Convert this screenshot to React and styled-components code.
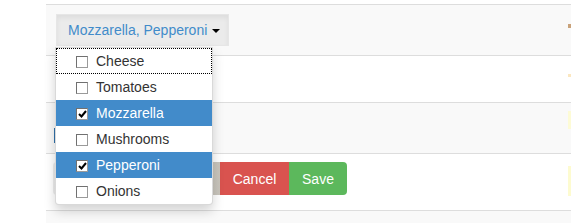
import React from 'react'
import styled, { createGlobalStyle, css } from 'styled-components'

const GlobalStyle = createGlobalStyle`
  html, body {
    margin: 0;
    padding: 0;
    overflow: hidden;
    background: #fff;
  }
  body {
    font-family: "Liberation Sans", Arial, sans-serif;
    font-size: 14px;
    color: #333;
  }
`

const Page = styled.div`
  padding: 4px 0 0 46px;
  width: 525px;
`

const Table = styled.div`
  border-top: 1px solid #ddd;
`

const Row = styled.div`
  display: flex;
  justify-content: space-between;
  height: ${p => p.h}px;
  border-bottom: 1px solid #ddd;
  background: ${p => (p.striped ? '#f9f9f9' : '#fff')};
`

const Cell = styled.div`
  display: flex;
  align-items: flex-start;
  padding: ${p => p.pad || '0 0 0 10px'};
`

const Tail = styled.div`
  width: 3px;
  margin-top: ${p => p.top}px;
  height: ${p => p.size}px;
  background: ${p => p.color};
`

const Dropdown = styled.div`
  position: relative;
`

const Toggle = styled.button`
  display: flex;
  align-items: center;
  height: 32px;
  width: 173px;
  padding: 0 0 0 11px;
  font: inherit;
  color: #428bca;
  background: #ebebeb;
  border: 1px solid #e6e6e6;
  border-radius: 0;
  box-shadow: inset 0 3px 5px rgba(0, 0, 0, 0.06);
  cursor: pointer;
`

const Caret = styled.span`
  display: inline-block;
  margin-left: 5px;
  margin-top: 1px;
  border-top: 4px solid #000;
  border-left: 4px solid transparent;
  border-right: 4px solid transparent;
`

const Menu = styled.ul`
  position: absolute;
  top: 33px;
  left: -1px;
  z-index: 10;
  width: 156px;
  margin: 0;
  padding: 0;
  list-style: none;
  background: #fff;
  border: 1px solid rgba(0, 0, 0, 0.15);
  border-radius: 0 0 4px 4px;
  box-shadow: 0 6px 12px rgba(0, 0, 0, 0.175);
`

const Item = styled.li`
  display: flex;
  align-items: center;
  height: 26px;
  padding-left: 20px;
  color: #333;
  ${p => p.active && css`
    background: #428bca;
    color: #fff;
  `}
  ${p => p.focused && css`
    outline: 1px dotted #000;
    outline-offset: -1px;
  `}
  &:last-child {
    border-radius: 0 0 4px 4px;
  }
`

const Box = styled.span`
  display: inline-flex;
  align-items: center;
  justify-content: center;
  box-sizing: border-box;
  width: 12px;
  height: 12px;
  margin: 1px 8px 0 0;
  background: #fff;
  border: 1px solid #707070;
  border-right-color: #9a9a9a;
  border-bottom-color: #9a9a9a;
`

const Field = styled.div`
  margin: 25px 0 0 -2px;
  width: 120px;
  height: 15px;
  border-left: 2px solid #3071a9;
`

const Group = styled.div`
  display: flex;
  margin-top: 8px;
`

const Btn = styled.button`
  height: 33px;
  padding: 0;
  width: ${p => p.w}px;
  font: inherit;
  font-size: 14px;
  color: #fff;
  border: 0;
  background: ${p => p.bg};
  border-radius: ${p => p.radius || '0'};
`

const toppings = [
  { name: 'Cheese', focused: true },
  { name: 'Tomatoes' },
  { name: 'Mozzarella', checked: true },
  { name: 'Mushrooms' },
  { name: 'Pepperoni', checked: true },
  { name: 'Onions' },
]

function Check({ checked }) {
  return (
    <Box>
      {checked && (
        <svg width="9" height="8" viewBox="0 0 9 8">
          <path d="M1 4 L3.5 6.5 L8 1" fill="none" stroke="#000" strokeWidth="2" />
        </svg>
      )}
    </Box>
  )
}

export default function App() {
  return (
    <>
      <GlobalStyle />
      <Page>
        <Table>
          <Row h={50} striped>
            <Cell pad="9px 0 0 10px">
              <Dropdown>
                <Toggle>
                  Mozzarella, Pepperoni<Caret />
                </Toggle>
                <Menu>
                  {toppings.map(t => (
                    <Item key={t.name} active={t.checked} focused={t.focused}>
                      <Check checked={t.checked} />
                      {t.name}
                    </Item>
                  ))}
                </Menu>
              </Dropdown>
            </Cell>
            <Tail top={19} size={4} color="#c9a27a" />
          </Row>
          <Row h={46}>
            <Cell />
            <Tail top={18} size={3} color="#fbe7c0" />
          </Row>
          <Row h={50} striped>
            <Cell pad="0 0 0 10px">
              <Field />
            </Cell>
            <Tail top={8} size={18} color="#fdfbd6" />
          </Row>
          <Row h={56}>
            <Cell pad="0 0 0 7px">
              <Group>
                <Btn w={167} bg="linear-gradient(90deg, #ececec, #c8c4bb)" radius="4px 0 0 4px" />
                <Btn w={69} bg="#d9534f">Cancel</Btn>
                <Btn w={58} bg="#5cb85c" radius="0 4px 4px 0">Save</Btn>
              </Group>
            </Cell>
            <Tail top={12} size={30} color="#fdfbd0" />
          </Row>
          <Row h={20} striped />
        </Table>
      </Page>
    </>
  )
}
